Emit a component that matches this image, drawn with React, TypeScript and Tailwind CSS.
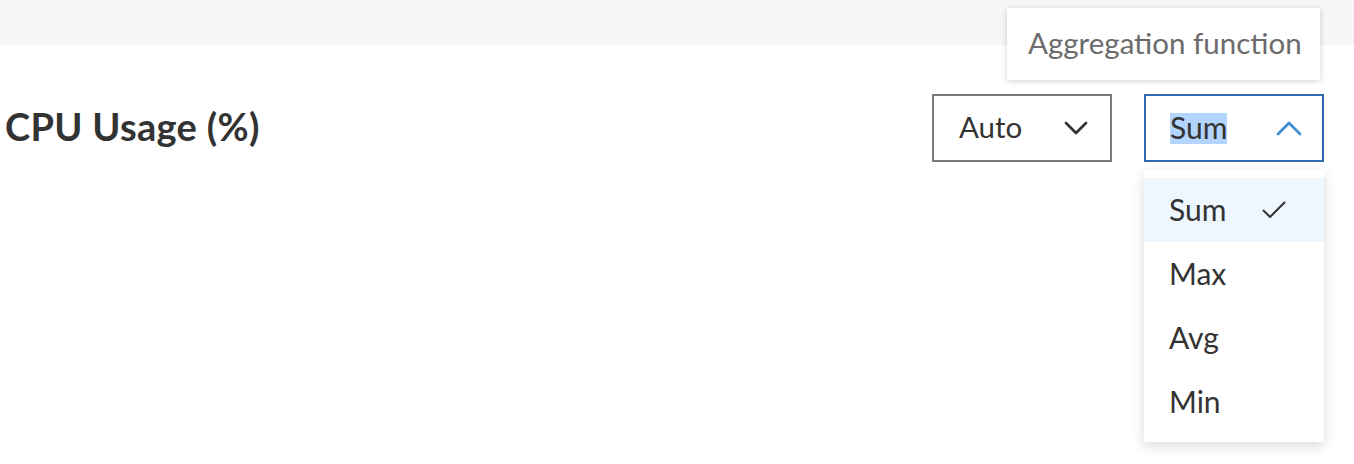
import React from "react";

const font = { fontFamily: "Lato, 'Open Sans', sans-serif" };

export default function App() {
  return (
    <div className="relative w-[1354px] h-[464px] bg-white overflow-hidden" style={font}>
      <div className="h-[45px] bg-[#f6f6f9]" />
      <div className="mt-[49px] flex items-center justify-between pl-[5px] pr-[30px]">
        <h1 className="text-[38px] leading-none font-bold text-[#333333] tracking-[0.3px] pb-[5px]">CPU Usage (%)</h1>
        <div className="flex items-center gap-[32px]">
          <div className="w-[180px] h-[68px] border-2 border-[#7b7b7b] flex items-center justify-between pl-[25px] pr-[22px]">
            <span className="text-[29.5px] text-[#333333] leading-none pb-[3px]">Auto</span>
            <svg width="24" height="14" viewBox="0 0 24 14" fill="none">
              <path d="M2 2 L12 12 L22 2" stroke="#333333" strokeWidth="2.8" strokeLinecap="round" strokeLinejoin="round" />
            </svg>
          </div>
          <div className="relative w-[180px] h-[68px] border-2 border-[#2f6aae] flex items-center justify-between pl-[24px] pr-[20px]">
            <span className="text-[30px] text-[#333333] leading-[29px] pb-[2px] bg-[#b3d4fc]">Sum</span>
            <svg width="26" height="15" viewBox="0 0 26 15" fill="none">
              <path d="M2 13 L13 2 L24 13" stroke="#3d8fd6" strokeWidth="2.8" strokeLinecap="round" strokeLinejoin="round" />
            </svg>
            <div className="absolute left-[-139px] top-[-88px] w-[313px] h-[72px] bg-white shadow-[0_1px_6px_rgba(0,0,0,0.18)] flex items-center pl-[21px]">
              <span className="text-[29.5px] text-[#6b6b6b] leading-none whitespace-nowrap pb-[3px]">Aggregation function</span>
            </div>
            <div className="absolute left-[-2px] top-[74px] w-[180px] bg-white py-[8px] shadow-[0_4px_12px_rgba(0,0,0,0.15)]">
              <div className="h-[64px] bg-[#eef6fe] flex items-center justify-between pl-[25px] pr-[38px]">
                <span className="text-[30px] text-[#333333] leading-none pb-[3px]">Sum</span>
                <svg width="24" height="18" viewBox="0 0 24 18" fill="none">
                  <path d="M1.5 9.5 L8 16 L22.5 1.5" stroke="#333333" strokeWidth="2" strokeLinecap="round" strokeLinejoin="round" />
                </svg>
              </div>
              {["Max", "Avg", "Min"].map((t) => (
                <div key={t} className="h-[64px] flex items-center pl-[25px]">
                  <span className="text-[30px] text-[#333333] leading-none pb-[3px]">{t}</span>
                </div>
              ))}
            </div>
          </div>
        </div>
      </div>
    </div>
  );
}
